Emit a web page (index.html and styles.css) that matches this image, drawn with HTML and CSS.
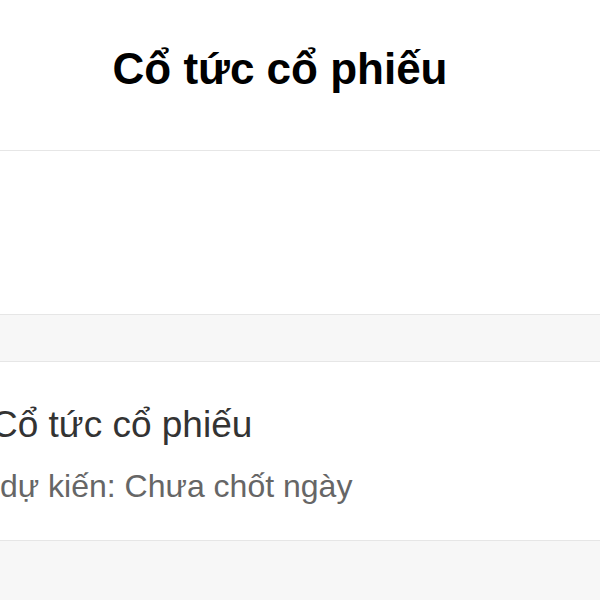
FILE: index.html
```html
<!DOCTYPE html>
<html lang="vi">
<head>
<meta charset="utf-8">
<link rel="stylesheet" href="styles.css">
</head>
<body>
<header class="header">
  <h1 class="title">Cổ tức cổ phiếu</h1>
</header>
<section class="panel"></section>
<div class="gap"></div>
<section class="row">
  <div class="row-title">Cổ tức cổ phiếu</div>
  <div class="row-sub">dự kiến: Chưa chốt ngày</div>
</section>
<div class="rest"></div>
</body>
</html>
```
FILE: styles.css
```css
html, body {
  margin: 0;
  padding: 0;
  background: #f7f7f7;
  font-family: "Liberation Sans", Arial, sans-serif;
  overflow: hidden;
}
.header {
  background: #fff;
  height: 150px;
  border-bottom: 1px solid #e6e6e6;
  display: flex;
  align-items: flex-start;
  justify-content: center;
  padding-right: 40px;
}
.title {
  margin: 0;
  margin-top: 41px;
  font-size: 44px;
  font-weight: 700;
  color: #000;
  line-height: 56px;
}
.panel {
  background: #fff;
  height: 163px;
  border-bottom: 1px solid #e6e6e6;
}
.gap {
  height: 46px;
}
.row {
  background: #fff;
  border-top: 1px solid #e6e6e6;
  border-bottom: 1px solid #e6e6e6;
  height: 180px;
  margin-left: -9px;
  display: flex;
  flex-direction: column;
  padding-top: 41px;
  box-sizing: border-box;
}
.row-title {
  font-size: 37px;
  color: #333;
  line-height: 44px;
}
.row-sub {
  margin-top: 20px;
  margin-left: 9px;
  font-size: 32px;
  color: #666;
  line-height: 38px;
}
```
